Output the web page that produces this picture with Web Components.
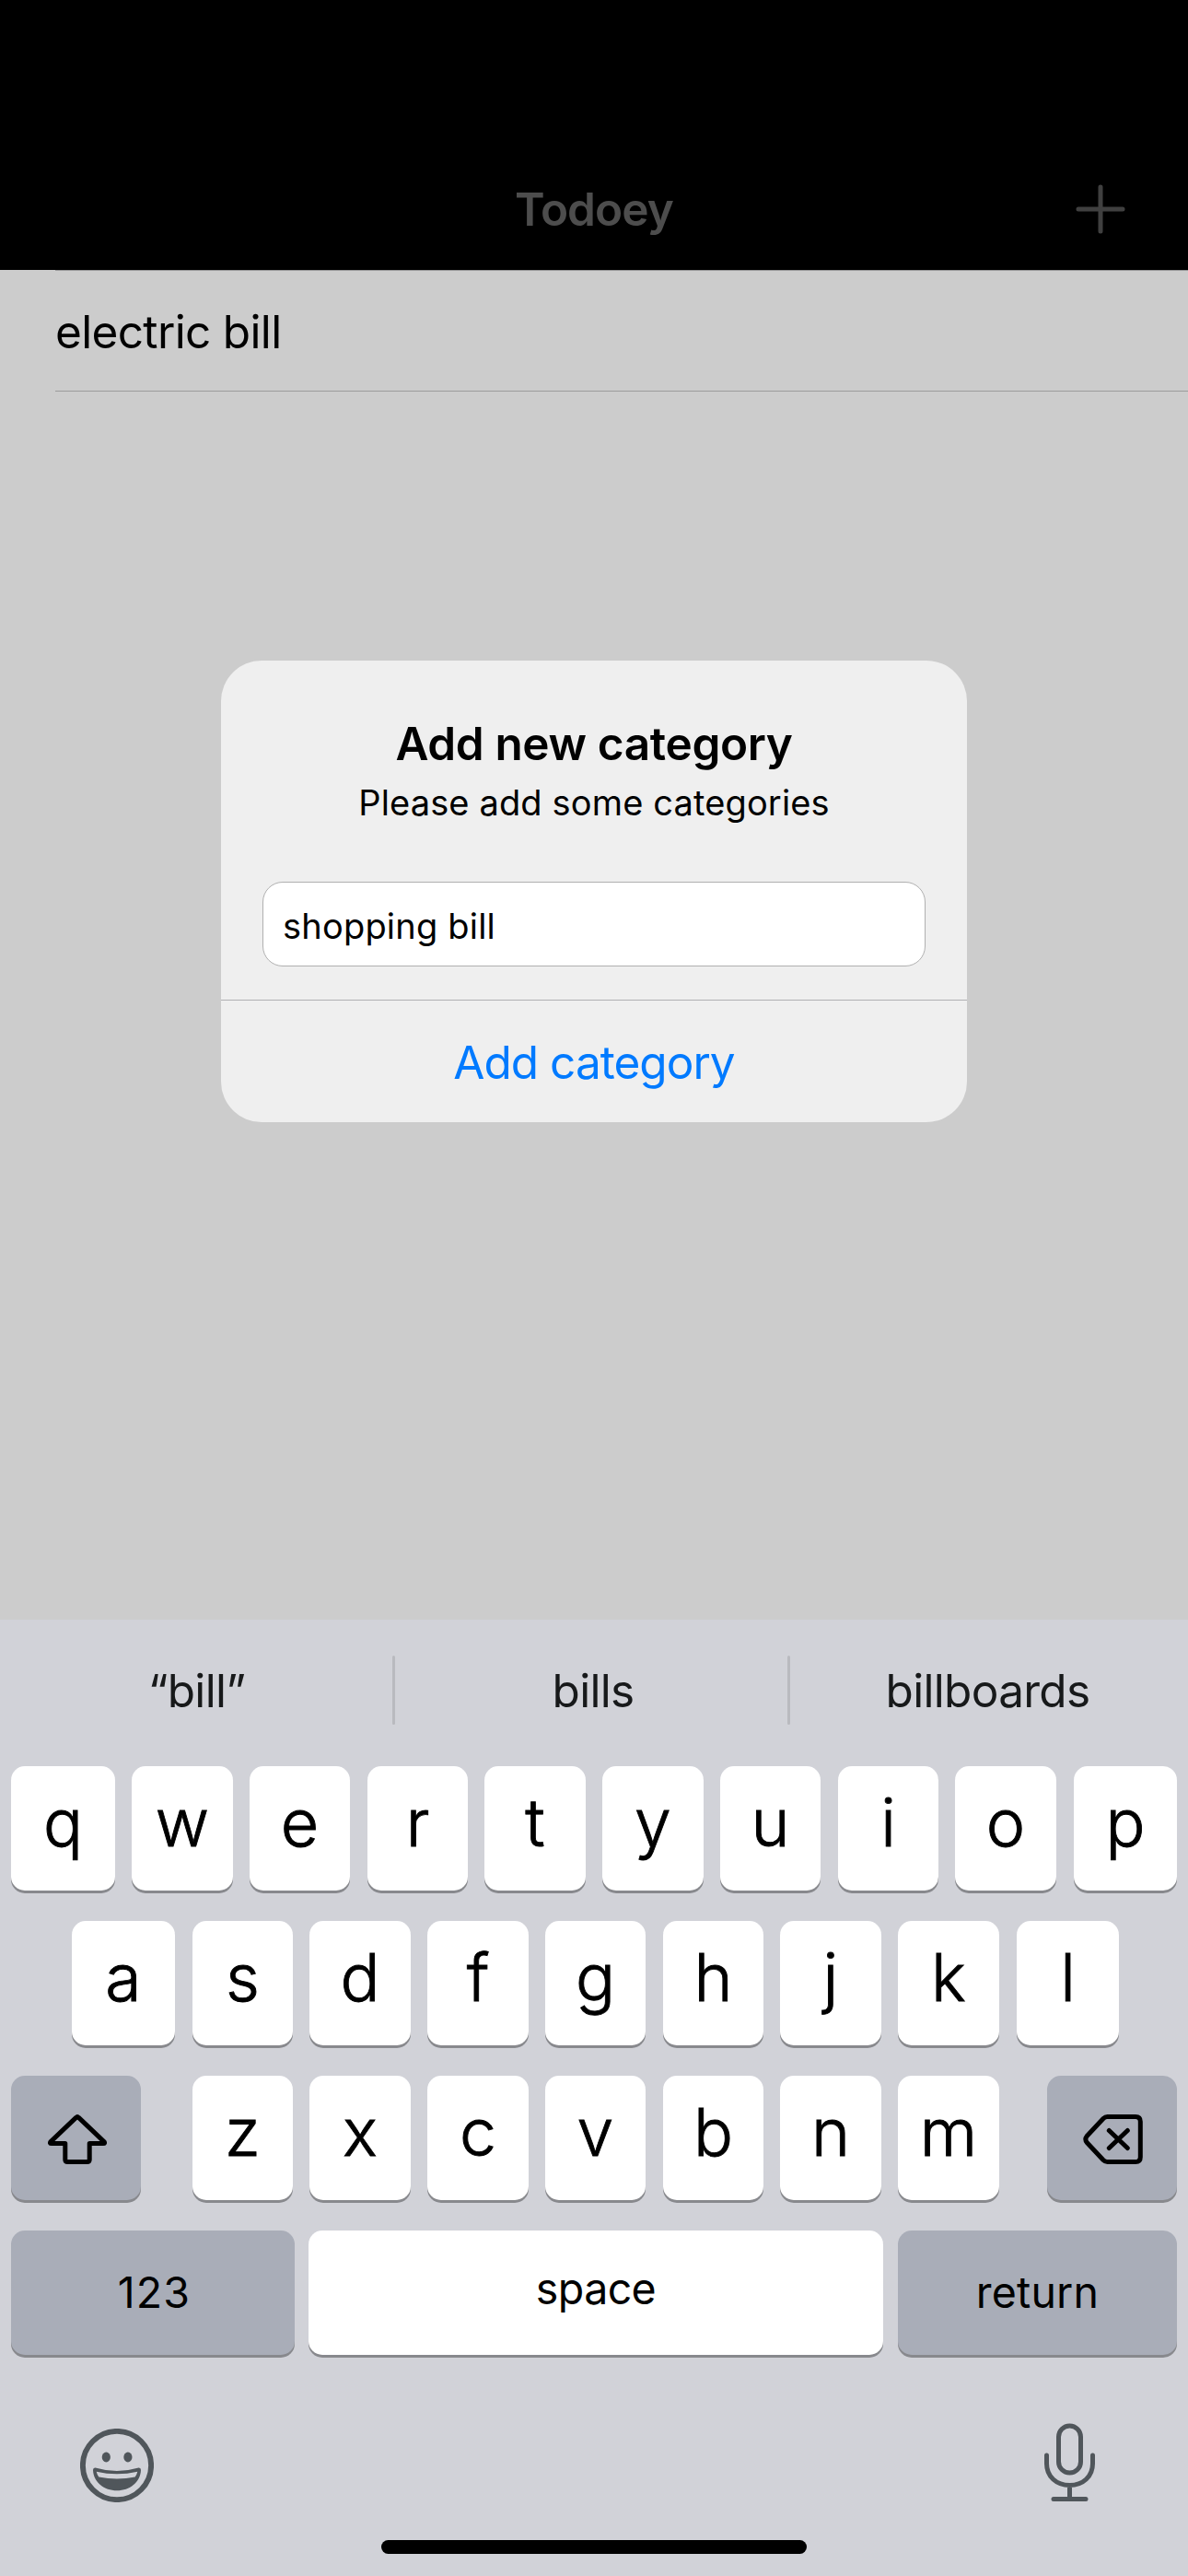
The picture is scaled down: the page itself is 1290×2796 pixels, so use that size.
<!DOCTYPE html>
<html lang="en">
<head>
<meta charset="utf-8">
<title>Todoey</title>
<style>
  html, body { margin: 0; background: #ccc; }
  body { font-family: Inter, "Liberation Sans", sans-serif; color: #000; }
</style>
</head>
<body>
<todo-app></todo-app>
<script>
const define = (name, html, setup) => customElements.define(name, class extends HTMLElement {
  connectedCallback() {
    if (this.shadowRoot) return;
    this.attachShadow({ mode: 'open' }).innerHTML = html;
    if (setup) setup(this, this.shadowRoot);
  }
});

define('nav-bar', `
  <style>
    :host { display: grid; grid-template-columns: 1fr auto 1fr; align-items: center; box-sizing: border-box;
      height: 293px; padding: 160px 68px 0 68px; background: #000; }
    h1 { grid-column: 2; margin: 0; font-size: 49.5px; font-weight: 600; line-height: 134px; color: #4d4d4d; letter-spacing: -0.9px; }
    svg { justify-self: end; display: block; }
  </style>
  <h1><slot></slot></h1>
  <svg width="54" height="54" viewBox="0 0 54 54" stroke="#404040" stroke-width="5" stroke-linecap="round"><path d="M27 3v48M3 27h48"/></svg>
`);

define('todo-row', `
  <style>
    :host { display: block; box-sizing: border-box; height: 132px; margin-left: 60px; border: solid #9b9b9c; border-width: 1px 0;
      font-size: 49.5px; line-height: 132px; letter-spacing: -0.66px; white-space: nowrap; }
  </style><slot></slot>
`);

define('alert-dialog', `
  <style>
    :host { position: absolute; left: 240px; top: 717px; width: 810px; height: 501px; display: flex; flex-direction: column;
      border-radius: 44px; background: #efefef; overflow: hidden; text-align: center; white-space: nowrap; }
    h2 { margin: 59px 0 0; font-size: 49.5px; line-height: 62px; font-weight: 600; letter-spacing: -0.36px; }
    p { margin: 9px 0 0; font-size: 38px; line-height: 48px; letter-spacing: 0.14px; }
    .field { box-sizing: border-box; height: 92px; margin: 62px 45px 0; padding-left: 21px; border: 1px solid #b0b0b0; border-radius: 22px;
      background: #fff; text-align: left; font-size: 38px; line-height: 94px; letter-spacing: 0.2px; }
    .action { margin-top: 36px; border-top: 1px solid #b0b0b3; height: 132px; font-size: 49.5px; line-height: 134px; letter-spacing: -0.98px; color: #007aff; }
  </style>
  <h2><slot name="title"></slot></h2>
  <p><slot name="message"></slot></p>
  <div class="field"><slot name="value"></slot></div>
  <div class="action"><slot name="action"></slot></div>
`);

define('suggestion-bar', `
  <style>
    :host { display: flex; height: 159px; align-items: flex-start; color: #17191a; font-size: 49.5px; letter-spacing: -0.7px; text-align: center; white-space: nowrap; }
    div { flex: none; box-sizing: border-box; width: 426px; height: 154px; line-height: 154px; }
    .first { padding-left: 1px; }
    .mid { padding-left: 4px; }
    .last { width: 432px; padding-right: 3px; }
    i { flex: none; width: 3px; height: 75px; margin-top: 39px; border-radius: 2px; background: #b9babf; }
  </style>
  <div class="first"><slot name="a"></slot></div><i></i><div class="mid"><slot name="b"></slot></div><i></i><div class="last"><slot name="c"></slot></div>
`);

define('key-cap', `
  <style>
    :host { display: flex; align-items: center; justify-content: center; flex: none; box-sizing: border-box; height: 135px;
      border-radius: 15px; background: #fff; box-shadow: 0 3px 0 #88898d; font-size: 71.5px; font-weight: 300; line-height: 135px;
      -webkit-text-stroke: 0.9px #000; }
    :host([tone="gray"]) { background: #a9adb8; }
    :host([kind="word"]) { font-size: 46.5px; font-weight: 400; letter-spacing: var(--ls, 0); -webkit-text-stroke: 0; }
    slot { display: block; }
    :host(:not([kind="icon"])) slot { margin-top: var(--drop, -13px); }
  </style><slot></slot>
`);

const SHIFT = `<svg style="display:block" width="66" height="59" viewBox="-1 -3 66 59" fill="none" stroke="#000" stroke-width="5" stroke-linejoin="round"><path d="M31.6 4.4Q33 3 34.4 4.4L62 30.6Q63.5 32.6 61 32.6H46.2V50Q46.2 52.6 43.6 52.6H22.4Q19.8 52.6 19.8 50V32.6H5Q2.500 32.6 4 30.6Z"/></svg>`;
const DELETE = `<svg style="display:block" width="66" height="59" viewBox="0 -3 66 59" fill="none" stroke="#000" stroke-width="5" stroke-linejoin="round" stroke-linecap="round"><path d="M27.500 3.500H58Q63.300 3.500 63.300 8.800V47.200Q63.300 52.500 58 52.500H27.500Q25 52.500 23 50.500L5.200 31.500Q2.500 28 5.200 24.500L23 5.500Q25 3.500 27.500 3.500ZM29.300 18.500L49.300 37.500M49.300 18.500L29.300 37.500"/></svg>`;
const EMOJI = `<svg width="80" height="80" viewBox="0 0 80 80" fill="none" stroke="#50565b"><circle cx="40" cy="40" r="37.100" stroke-width="5.900"/><g fill="#50565b" stroke="none"><ellipse cx="28.300" cy="31" rx="4.600" ry="5.400"/><ellipse cx="51.900" cy="31" rx="4.600" ry="5.400"/><path fill-rule="evenodd" d="M16.500 42.500Q40 49.500 63.500 42.500Q66 42.200 66 45C65.500 58 54 67.300 40 67.300S14.500 58 14 45Q14 42.200 16.500 42.500ZM17.700 46.700Q18.500 50 20.300 52.600Q40 56.400 59.700 52.600Q61.500 50 62.300 46.700Q40 51.700 17.700 46.700Z"/></g></svg>`;
const MIC = `<svg width="58" height="86" viewBox="0 0 58 86" fill="none" stroke="#50565b" stroke-width="5" stroke-linecap="round"><rect x="16.500" y="3" width="24" height="51" rx="12"/><path d="M3.500 35V44C3.500 58 14 67.500 28.500 67.500S53.500 58 53.500 44V35M28.500 68V82M11 82.500H46"/></svg>`;

// Each key: [label, width, space before it, options]
const ROWS = [
  [['q',113,12],['w',110,18],['e',109,18],['r',109,19],['t',110,18],['y',110,18],['u',109,18],['i',109,19],['o',110,18],['p',112,19]],
  [['a',112,78],['s',109,19],['d',110,18],['f',110,18],['g',109,18],['h',109,19],['j',110,18],['k',110,18],['l',111,19]],
  [[SHIFT,141,12,'tone="gray" kind="icon"'],['z',109,56],['x',110,18],['c',110,18],['v',109,18],['b',109,19],['n',110,18],['m',110,18],[DELETE,141,52,'tone="gray" kind="icon"']],
  [['123',308,12,'tone="gray" kind="word" style="--drop:-1px;--ls:1.200px;padding-left:3px"'],['space',624,15,'kind="word" style="--drop:-9px;--ls:-0.600px"'],['return',303,16,'tone="gray" kind="word" style="--drop:-1px;--ls:0.200px"']]
];

define('key-row', `<style>:host { display: flex; height: 135px; }</style><slot></slot>`);

define('key-board', `
  <style>
    :host { display: flex; flex-direction: column; height: 1038px; background: #d1d2d8; }
    .rows { display: flex; flex-direction: column; gap: 33px; }
    .tools { display: flex; box-sizing: border-box; justify-content: space-between; align-items: flex-start; padding: 74px 99px 0 87px; height: 201px; }
    .tools svg { display: block; }
    .tools svg:first-child { margin-top: 6px; }
    .home { width: 462px; height: 15px; border-radius: 8px; background: #000; align-self: center; }
  </style>
  <suggestion-bar><slot name="a" slot="a"></slot><slot name="b" slot="b"></slot><slot name="c" slot="c"></slot></suggestion-bar>
  <div class="rows"></div>
  <div class="tools">${EMOJI}${MIC}</div>
  <div class="home"></div>
`, (host, root) => {
  root.querySelector('.rows').innerHTML = ROWS.map(r => '<key-row>' + r.map(([label, w, gap, opt = 'style=""']) => {
    const box = `width:${w}px;margin-left:${gap}px;`;
    const attrs = opt.includes('style="') ? opt.replace('style="', 'style="' + box) : `${opt} style="${box}"`;
    return `<key-cap ${attrs}>${label}</key-cap>`;
  }).join('') + '</key-row>').join('');
});

define('todo-app', `
  <style>
    :host { position: relative; display: flex; flex-direction: column; width: 1290px; height: 2796px; background: #ccc; overflow: hidden; }
    main { flex: 1; }
  </style>
  <nav-bar>Todoey</nav-bar>
  <main><todo-row>electric bill</todo-row></main>
  <key-board><span slot="a">“bill”</span><span slot="b">bills</span><span slot="c">billboards</span></key-board>
  <alert-dialog>
    <span slot="title">Add new category</span>
    <span slot="message">Please add some categories</span>
    <span slot="value">shopping bill</span>
    <span slot="action">Add category</span>
  </alert-dialog>
`);
</script>
</body>
</html>
